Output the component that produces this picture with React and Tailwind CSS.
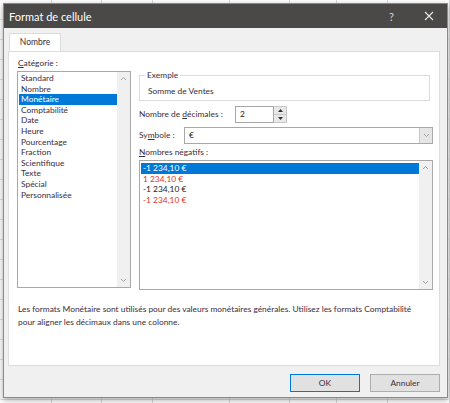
import React from "react";

const cols = [52, 50, 51, 77, 60, 47, 51, 62];

function UpArrow() {
  return (
    <svg width="7" height="5" viewBox="0 0 7 5"><path d="M1 4 L3.5 1.5 L6 4" fill="none" stroke="#a0a0a0" strokeWidth="1" /></svg>
  );
}
function DownArrow() {
  return (
    <svg width="7" height="5" viewBox="0 0 7 5"><path d="M1 1 L3.5 3.5 L6 1" fill="none" stroke="#a0a0a0" strokeWidth="1" /></svg>
  );
}

function ScrollBar() {
  return (
    <div className="w-[13px] h-full bg-[#f0f0f0] flex flex-col justify-between items-center py-[4px]">
      <UpArrow />
      <DownArrow />
    </div>
  );
}

export default function App() {
  const cats = ["Standard", "Nombre", "Monétaire", "Comptabilité", "Date", "Heure", "Pourcentage", "Fraction", "Scientifique", "Texte", "Spécial", "Personnalisée"];
  const txt = "text-[#3b2d40]";
  return (
    <div className="relative w-[450px] h-[403px] overflow-hidden bg-white" style={{ fontFamily: 'Lato, "Noto Sans", sans-serif' }}>
      {/* spreadsheet background */}
      <div className="absolute inset-0 flex">
        {cols.map((w, i) => (
          <div key={i} className="h-full border-r border-[#d8d8d8] shrink-0" style={{ width: w }} />
        ))}
      </div>
      <div className="absolute inset-0 flex flex-col">
        {Array.from({ length: 21 }).map((_, i) => (
          <div key={i} className="h-[20px] border-b border-[#e2e2e2] shrink-0" />
        ))}
      </div>

      {/* dialog */}
      <div className="absolute left-[3px] top-[3px] w-[445px] h-[395px] bg-[#f0f0f0] border border-[#8a8a8a] shadow-[0_2px_6px_rgba(0,0,0,0.35)] flex flex-col">
        <div className="h-[24px] bg-[#4a4947] flex items-center justify-between pl-[5px] pr-[13px] text-white shrink-0">
          <span className="text-[11px] leading-none">Format de cellule</span>
          <div className="flex items-center gap-[30px]">
            <span className="text-[11px] leading-none text-[#d8d8d8]">?</span>
            <svg width="10" height="10" viewBox="0 0 10 10"><path d="M1 1 L9 9 M9 1 L1 9" stroke="#e8e8e8" strokeWidth="1.1" /></svg>
          </div>
        </div>

        <div className="flex flex-col px-[4px] pt-[5px]">
          {/* tab */}
          <div className="flex">
            <div className={`ml-[1px] w-[52px] h-[18px] bg-white border border-b-0 border-[#dcdcdc] flex items-center justify-center text-[8.5px] ${txt}`}>Nombre</div>
          </div>
          {/* panel */}
          <div className="w-[432px] h-[315px] bg-white border border-[#dcdcdc] flex flex-col">
            <div className={`pl-[9px] pt-[6px] text-[8.4px] leading-[11px] ${txt}`}><span className="underline">C</span>atégorie :</div>
            <div className="flex pl-[8px] pt-[2px] gap-[8px]">
              {/* category list */}
              <div className="w-[114px] h-[217px] border border-[#a8a8a8] flex">
                <div className="flex-1 flex flex-col pt-[1px] pl-[1px]">
                  {cats.map((c) => (
                    <div key={c} className={`h-[10.6px] leading-[10.6px] text-[8.4px] pl-[2px] ${c === "Monétaire" ? "bg-[#0078d7] text-white" : txt}`}>{c}</div>
                  ))}
                </div>
                <ScrollBar />
              </div>

              {/* right column */}
              <div className="w-[294px] flex flex-col">
                <div className="relative mt-[4px] w-[291px] h-[26px] border border-[#dcdcdc] flex items-end pb-[3px] pl-[8px]">
                  <span className={`absolute -top-[6px] left-[5px] bg-white px-[2px] text-[8.4px] leading-[10px] ${txt}`}>Exemple</span>
                  <span className={`text-[8.4px] leading-[11px] ${txt}`}>Somme de Ventes</span>
                </div>
                <div className="flex items-center mt-[5px] h-[17px]">
                  <span className={`text-[8.4px] w-[96px] ${txt}`}>Nombre de <span className="underline">d</span>écimales :</span>
                  <div className="w-[39px] h-[17px] border border-[#a8a8a8] flex items-center pl-[4px] text-[8.4px] text-[#222]">2</div>
                  <div className="w-[13px] h-[17px] flex flex-col border border-l-0 border-[#c8c8c8] bg-[#e8e8e8]">
                    <div className="flex-1 flex items-center justify-center border-b border-[#c8c8c8]"><svg width="5" height="3" viewBox="0 0 5 3"><path d="M0 3 L2.5 0 L5 3Z" fill="#333" /></svg></div>
                    <div className="flex-1 flex items-center justify-center"><svg width="5" height="3" viewBox="0 0 5 3"><path d="M0 0 L2.5 3 L5 0Z" fill="#333" /></svg></div>
                  </div>
                </div>
                <div className="flex items-center mt-[4px] h-[17px]">
                  <span className={`text-[8.4px] w-[45px] ${txt}`}>Sy<span className="underline">m</span>bole :</span>
                  <div className="w-[249px] h-[17px] border border-[#a8a8a8] flex items-center">
                    <span className="flex-1 pl-[4px] text-[8.4px] text-[#222]">€</span>
                    <div className="w-[13px] h-full bg-[#e6e6e6] border-l border-[#c8c8c8] flex items-center justify-center"><DownArrow /></div>
                  </div>
                </div>
                <div className={`mt-[3px] text-[8.4px] leading-[11px] ${txt}`}><span className="underline">N</span>ombres négatifs :</div>
                <div className="mt-[2px] w-[294px] h-[130px] border border-[#a8a8a8] flex">
                  <div className="flex-1 flex flex-col pt-[2px] pl-[1px] text-[8.4px]">
                    <div className="h-[10.5px] leading-[10.5px] pl-[2px] bg-[#0078d7] text-white">-1 234,10 €</div>
                    <div className="h-[10.5px] leading-[10.5px] pl-[2px] text-[#e0332b]">1 234,10 €</div>
                    <div className="h-[10.5px] leading-[10.5px] pl-[2px] text-[#222]">-1 234,10 €</div>
                    <div className="h-[10.5px] leading-[10.5px] pl-[2px] text-[#e0332b]">-1 234,10 €</div>
                  </div>
                  <ScrollBar />
                </div>
              </div>
            </div>
            <div className={`pl-[9px] mt-[13px] text-[8.4px] leading-[13px] whitespace-nowrap ${txt}`}>
              Les formats Monétaire sont utilisés pour des valeurs monétaires générales. Utilisez les formats Comptabilité<br />pour aligner les décimaux dans une colonne.
            </div>
          </div>
          {/* buttons */}
          <div className="flex justify-end gap-[10px] mt-[8px] pr-[3px]">
            <div className={`w-[70px] h-[18px] border border-[#0078d7] bg-[#e1e1e1] flex items-center justify-center text-[8.4px] ${txt}`}>OK</div>
            <div className={`w-[70px] h-[18px] border border-[#adadad] bg-[#e1e1e1] flex items-center justify-center text-[8.4px] ${txt}`}>Annuler</div>
          </div>
        </div>
      </div>
    </div>
  );
}
